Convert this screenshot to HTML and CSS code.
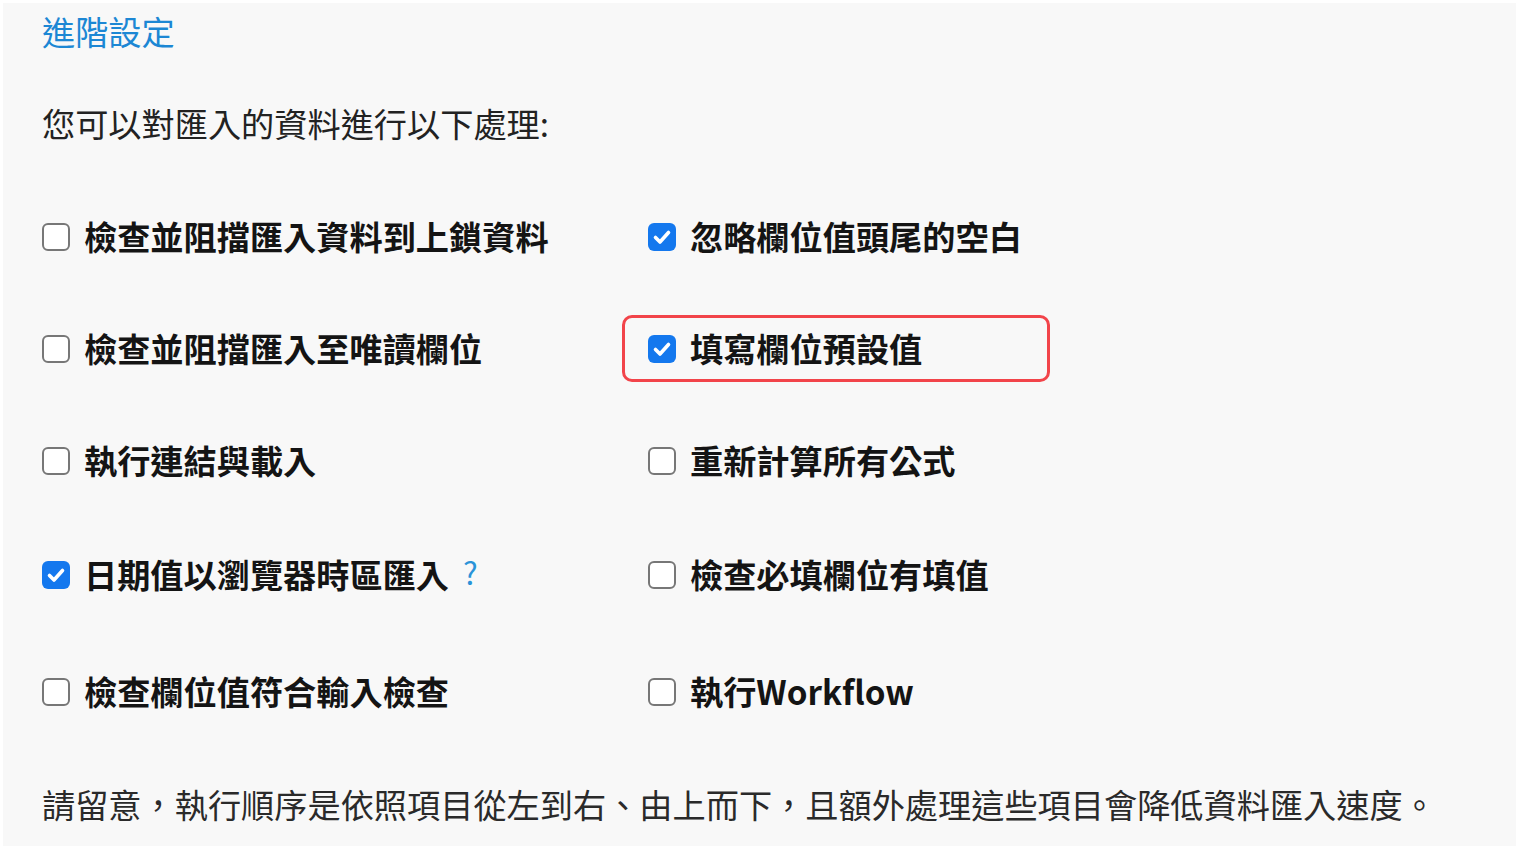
FILE: index.html
```html
<!DOCTYPE html>
<html lang="zh-Hant">
<head>
  <meta charset="UTF-8" />
  <meta name="viewport" content="width=device-width, initial-scale=1.0"/>
  <title>進階設定</title>
  <link rel="stylesheet" href="styles.css">
</head>
<body>
  <div class="panel">
    <h2 class="title">進階設定</h2>
    <p class="intro">您可以對匯入的資料進行以下處理:</p>

    <div class="options">
      <label class="option"><span class="box"></span><span class="label">檢查並阻擋匯入資料到上鎖資料</span></label>
      <label class="option"><span class="box checked"><svg viewBox="0 0 28 28"><path d="M7.5 14.5l4.5 4.5 8.5-9.5"/></svg></span><span class="label">忽略欄位值頭尾的空白</span></label>

      <label class="option"><span class="box"></span><span class="label">檢查並阻擋匯入至唯讀欄位</span></label>
      <label class="option highlight"><span class="box checked"><svg viewBox="0 0 28 28"><path d="M7.5 14.5l4.5 4.5 8.5-9.5"/></svg></span><span class="label">填寫欄位預設值</span></label>

      <label class="option"><span class="box"></span><span class="label">執行連結與載入</span></label>
      <label class="option"><span class="box"></span><span class="label">重新計算所有公式</span></label>

      <label class="option"><span class="box checked"><svg viewBox="0 0 28 28"><path d="M7.5 14.5l4.5 4.5 8.5-9.5"/></svg></span><span class="label">日期值以瀏覽器時區匯入</span><span class="help">?</span></label>
      <label class="option"><span class="box"></span><span class="label">檢查必填欄位有填值</span></label>

      <label class="option"><span class="box"></span><span class="label">檢查欄位值符合輸入檢查</span></label>
      <label class="option"><span class="box"></span><span class="label">執行Workflow</span></label>
    </div>

    <p class="note">請留意，執行順序是依照項目從左到右、由上而下，且額外處理這些項目會降低資料匯入速度。</p>
  </div>
</body>
</html>
```

FILE: styles.css
```css
body {
  margin: 0;
  background: #fff;
  font-family: "Noto Sans CJK TC", "Noto Sans", sans-serif;
}
.panel {
  margin: 3px;
  height: 843px;
  box-sizing: border-box;
  background: #f8f8f8;
  padding: 8px 0 0 39px;
}
.title {
  margin: 0;
  font-size: 33.2px;
  line-height: 40px;
  font-weight: normal;
  color: #1c87d4;
}
.intro {
  margin: 52px 0 0;
  font-size: 33.2px;
  line-height: 40px;
  color: #222;
}
.options {
  margin: 60px 0 0 -26px;
  display: grid;
  grid-template-columns: 606px 606px;
  grid-template-rows: 112px 112px 114px 117px 67px;
}
.option {
  justify-self: start;
  align-self: start;
  display: flex;
  align-items: center;
  height: 67px;
  box-sizing: border-box;
  padding: 0 20px 0 23px;
  border: 3px solid transparent;
  border-radius: 10px;
  cursor: pointer;
}
.option.highlight {
  width: 428px;
  border-color: #f2444a;
}
.box {
  width: 28px;
  height: 28px;
  box-sizing: border-box;
  border: 2.5px solid #777;
  border-radius: 6px;
  background: #fff;
  margin-right: 14px;
  flex-shrink: 0;
}
.box.checked {
  border: none;
  background: #1478ee;
}
.box svg {
  display: block;
  width: 28px;
  height: 28px;
}
.box svg path {
  fill: none;
  stroke: #fff;
  stroke-width: 3.6;
  stroke-linecap: round;
  stroke-linejoin: round;
}
.label {
  font-size: 33.2px;
  line-height: 40px;
  font-weight: bold;
  color: #141414;
  position: relative;
  top: -1px;
}
.help {
  margin-left: 14px;
  font-size: 31px;
  line-height: 40px;
  color: #2a93d8;
  position: relative;
  top: -3px;
}
.note {
  margin: 58.5px 0 0;
  font-size: 33.2px;
  line-height: 40px;
  color: #2a2a2a;
}
```
